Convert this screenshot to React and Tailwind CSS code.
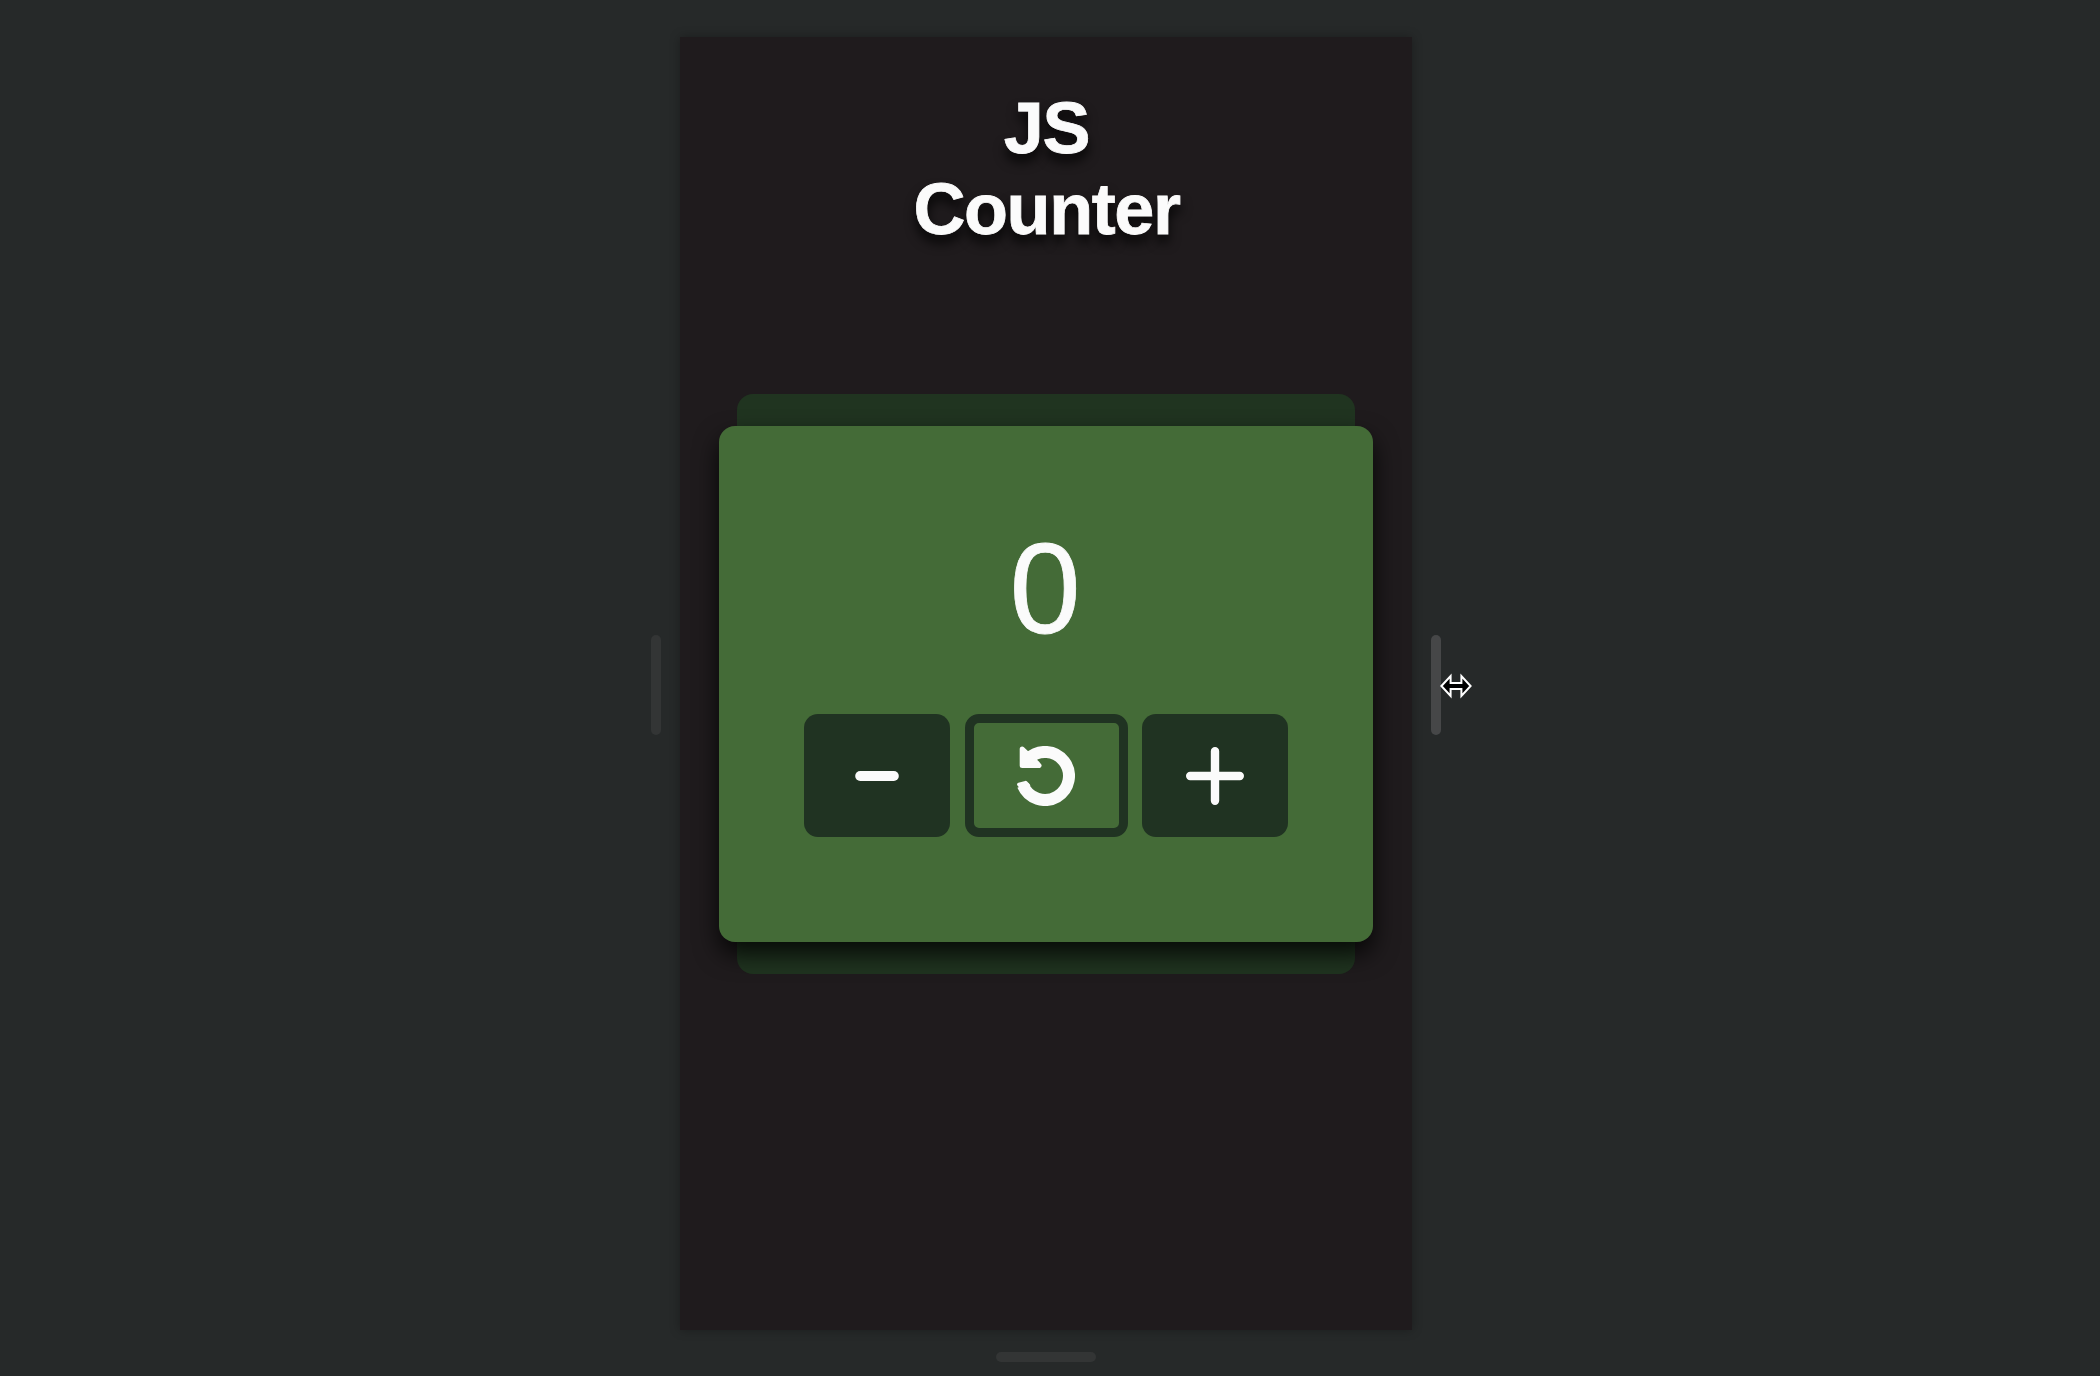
import React from "react";

function MinusIcon() {
  return (
    <svg width="58" height="60" viewBox="0 0 58 60" fill="none" stroke="#fbfbfb" strokeWidth="10" strokeLinecap="round">
      <path d="M12.2 30H45.8" />
    </svg>
  );
}

function ResetIcon() {
  return (
    <svg className="mr-[2px]" width="60" height="60" viewBox="0 0 60 60" fill="none" stroke="#fbfbfb">
      <path d="M13.2 12.8A24 24 0 1 1 7.9 39.4" strokeWidth="12" />
      <path d="M3.8 38.4L10.6 36.6L13.5 39.5L8 43.5Z" fill="#fbfbfb" strokeWidth="3.5" strokeLinejoin="round" />
      <path d="M7.2 3L14 9.6L22.4 17.6L24 19.5H7.2Z" fill="#fbfbfb" strokeWidth="5" strokeLinejoin="round" />
    </svg>
  );
}

function PlusIcon() {
  return (
    <svg width="60" height="60" viewBox="0 0 60 60" fill="none" stroke="#fbfbfb" strokeWidth="8.4" strokeLinecap="round">
      <path d="M30 5.2V54.8M5.2 30H54.8" />
    </svg>
  );
}

function ResizeCursor() {
  return (
    <svg className="absolute left-[8px] top-[38px]" width="34" height="26" viewBox="0 0 34 26">
      <path
        d="M2.4 13L11.6 3V10H22.4V3L31.6 13L22.4 23V16H11.6V23Z"
        fill="#000"
        stroke="#fff"
        strokeWidth="2"
      />
    </svg>
  );
}

export default function App() {
  return (
    <div className="flex h-[1376px] w-[2100px] flex-col items-center overflow-hidden bg-[#262929] pt-[37px] pr-[8px] font-['Liberation_Sans',Arial,sans-serif] text-[#fbfbfb]">
      <div className="flex items-center gap-[19px]">
        <div className="mt-[2px] h-[100px] w-[10px] rounded-full bg-[#333535]" />
        <main className="flex h-[1293px] w-[732px] flex-col items-center bg-[#1f1b1d] pt-[51px] shadow-[0_0_10px_rgba(0,0,0,0.3)]">
          <h1 className="pl-[1px] text-center text-[72px] leading-[81px] font-bold tracking-[-1.4px] [-webkit-text-stroke:0.8px_#fbfbfb] [text-shadow:0_8px_12px_rgba(0,0,0,0.85)]">
            JS
            <br />
            Counter
          </h1>
          <section className="mt-[144px] flex h-[580px] w-[618px] items-center justify-center rounded-[16px] bg-[#203420]">
            <div className="flex h-[516px] w-[654px] shrink-0 flex-col items-center rounded-[16px] bg-[#446b37] pt-[91px] shadow-[0_12px_24px_rgba(0,0,0,0.8)]">
              <div className="pr-[2px] text-[128px] leading-[144px] [-webkit-text-stroke:0.8px_#fbfbfb]">0</div>
              <div className="mt-[53px] flex h-[123px] gap-[14.5px]">
                <button className="flex w-[146px] items-center justify-center rounded-[14px] bg-[#203322]">
                  <MinusIcon />
                </button>
                <button className="flex w-[163px] items-center justify-center rounded-[14px] border-[9px] border-[#203322]">
                  <ResetIcon />
                </button>
                <button className="flex w-[146px] items-center justify-center rounded-[14px] bg-[#203322]">
                  <PlusIcon />
                </button>
              </div>
            </div>
          </section>
        </main>
        <div className="relative mt-[2px] h-[100px] w-[10px] rounded-full bg-[#464748]">
          <ResizeCursor />
        </div>
      </div>
      <div className="mt-[22px] h-[10px] w-[100px] shrink-0 rounded-full bg-[#333535]" />
    </div>
  );
}
